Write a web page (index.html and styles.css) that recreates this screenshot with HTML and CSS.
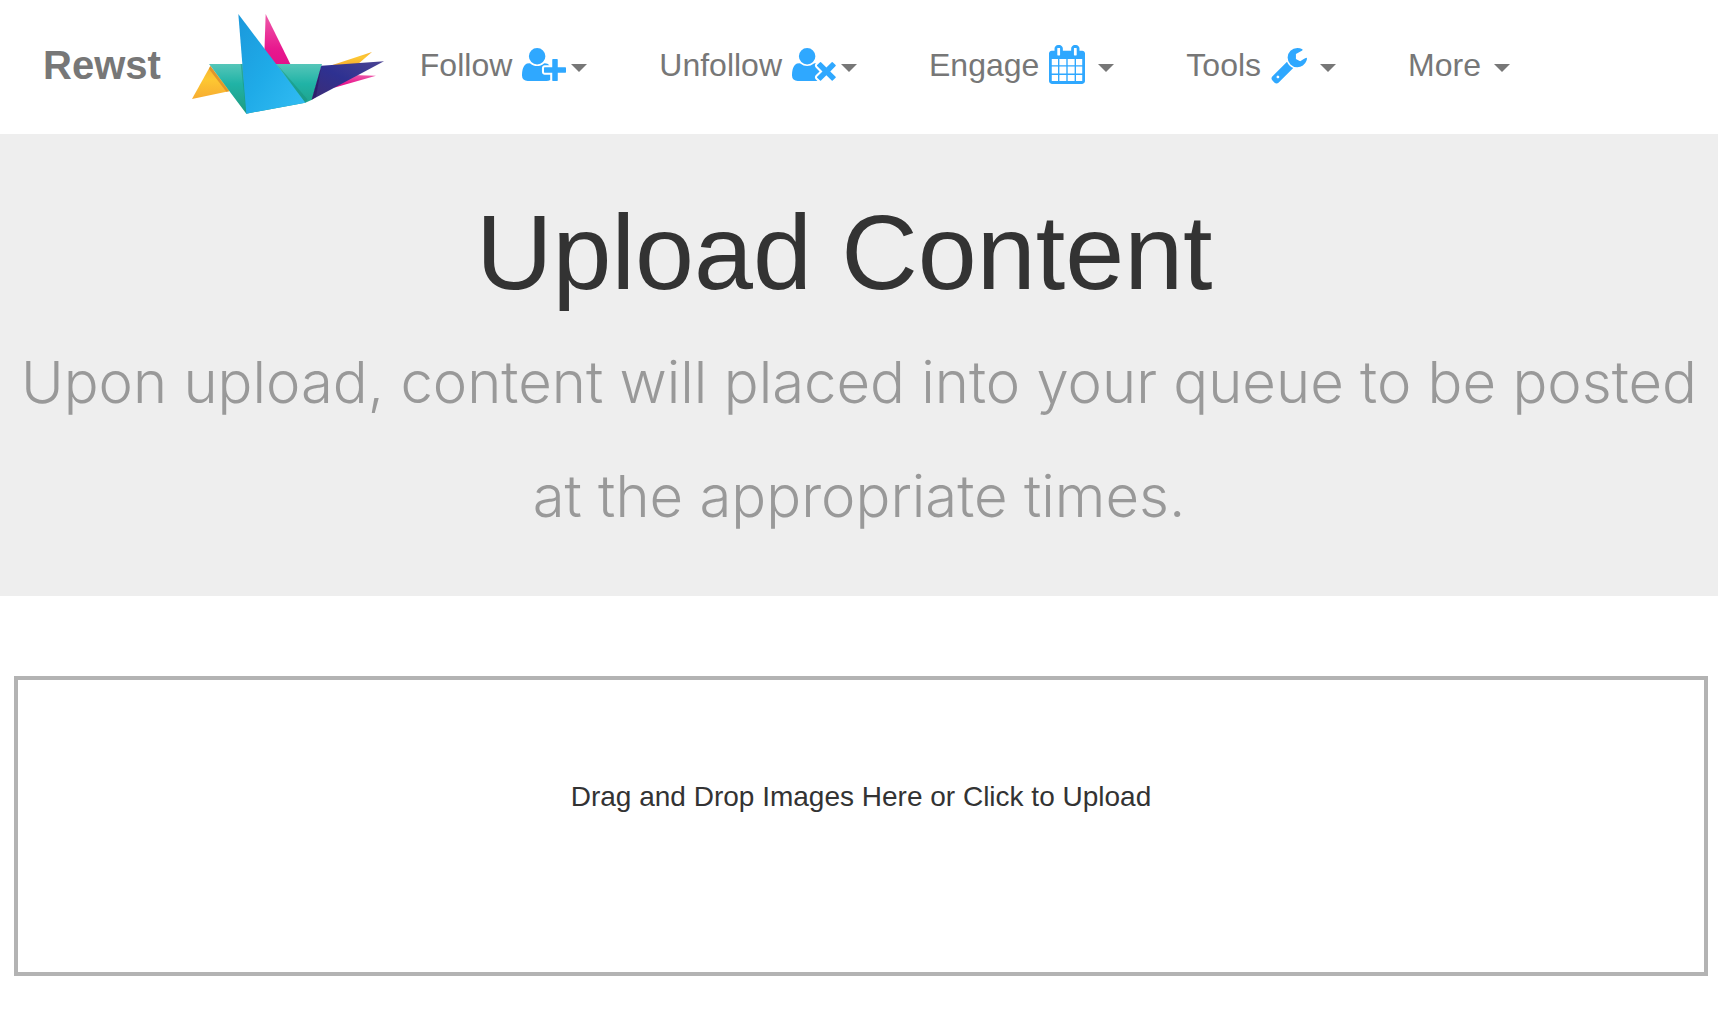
FILE: index.html
```html
<!DOCTYPE html>
<html lang="en">
<head>
<meta charset="utf-8">
<meta name="viewport" content="width=device-width, initial-scale=1">
<title>Rewst - Upload Content</title>
<link rel="stylesheet" href="styles.css">
</head>
<body>
<header class="navbar">
  <a class="brand" href="#">
    <span>Rewst</span>
    <svg class="logo" viewBox="36 42 576 300" aria-hidden="true">
      <defs>
        <linearGradient id="blue" x1="0" y1="0" x2="1" y2="1"><stop offset="0" stop-color="#1b98db"/><stop offset=".5" stop-color="#1fabe8"/><stop offset="1" stop-color="#33bdf3"/></linearGradient>
        <linearGradient id="teal" x1="0" y1="0" x2="0" y2="1"><stop offset="0" stop-color="#55c6b9"/><stop offset=".4" stop-color="#20b3a6"/><stop offset="1" stop-color="#1f9b80"/></linearGradient>
        <linearGradient id="pink" x1="0" y1="0" x2="0" y2="1"><stop offset="0" stop-color="#ee5aa9"/><stop offset=".7" stop-color="#e8188e"/><stop offset="1" stop-color="#e3128a"/></linearGradient>
        <linearGradient id="gold" x1="0" y1="0" x2="0" y2="1"><stop offset="0" stop-color="#f6b233"/><stop offset=".4" stop-color="#fdc832"/><stop offset="1" stop-color="#f7ac31"/></linearGradient>
        <linearGradient id="navy" x1="1" y1="0" x2="0" y2="1"><stop offset="0" stop-color="#4b4393"/><stop offset=".5" stop-color="#2e3191"/><stop offset="1" stop-color="#3d2c75"/></linearGradient>
      </defs>
      <path fill="url(#gold)" d="M91 198L36 297L150 273Z"/>
      <path fill="url(#pink)" d="M257 42L252 192H331Z"/>
      <path fill="url(#teal)" d="M87 192H290L376 308L199 341ZM287 192H426L396 299L376 308Z"/>
      <path fill="#178f7c" opacity=".5" d="M182 192L199 341L187 192ZM290 192L376 308L382 298Z"/>
      <path fill="#d98c2b" opacity=".8" d="M91 198L147 274L139 275L87 207Z"/>
      <path fill="url(#blue)" d="M175 42L376 308L199 341L187 192Z"/>
      <path fill="url(#gold)" d="M576 156L455 196L530 196Z"/>
      <path fill="url(#pink)" d="M588 227L490 224L462 263Z"/>
      <path fill="url(#navy)" d="M424 197L612 184L395 299Z"/>
      <path fill="#2a1a66" opacity=".7" d="M424 197L395 299L408 291Z"/>
    </svg>
  </a>
  <nav class="menu" aria-label="Main">
    <button class="menu-item" type="button">
      <span>Follow</span>
      <svg class="icon icon-user" viewBox="0 0 2048 1792" aria-hidden="true"><path d="M704 896q-159 0-271.500-112.500t-112.500-271.500 112.500-271.500 271.500-112.500 271.500 112.500 112.500 271.500-112.500 271.500-271.500 112.500zm960 128h352q13 0 22.500 9.500t9.500 22.500v192q0 13-9.500 22.500t-22.500 9.500h-352v352q0 13-9.500 22.500t-22.500 9.500h-192q-13 0-22.500-9.500t-9.500-22.500v-352h-352q-13 0-22.500-9.500t-9.500-22.500v-192q0-13 9.500-22.500t22.500-9.500h352v-352q0-13 9.500-22.500t22.500-9.500h192q13 0 22.500 9.500t9.500 22.500v352zm-736 224q0 52 38 90t90 38h256v238q-68 50-171 50h-874q-121 0-194-69t-73-190q0-53 3.500-103.500t14-109 26.500-108.500 43-97.500 62-81 85.500-53.500 111.500-20q19 0 39 17 79 61 154.500 91.500t164.500 30.500 164.500-30.500 154.500-91.500q20-17 39-17 132 0 217 96h-223q-52 0-90 38t-38 90v192z"/></svg>
      <span class="caret"></span>
    </button>
    <button class="menu-item" type="button">
      <span>Unfollow</span>
      <svg class="icon icon-user" viewBox="0 0 2048 1792" aria-hidden="true"><path d="M704 896q-159 0-271.500-112.500t-112.500-271.500 112.500-271.500 271.500-112.500 271.500 112.500 112.500 271.500-112.500 271.500-271.500 112.500zm1077 320l249 249q9 9 9 23 0 13-9 22l-136 136q-9 9-22 9-14 0-23-9l-249-249-249 249q-9 9-23 9-13 0-22-9l-136-136q-9-9-9-22 0-14 9-23l249-249-249-249q-9-9-9-23 0-13 9-22l136-136q9-9 22-9 14 0 23 9l249 249 249-249q9-9 23-9 13 0 22 9l136 136q9 9 9 22 0 14-9 23zm-498 0l-181-181q-37-37-37-91 0-33 13-56t41-50q-29-6-57-6-19 0-39 17-154 122-319 122t-319-122q-20-17-39-17-61 0-111.500 20t-85.500 53.500-62 81-43 97.500-26.500 108.500-14 109-3.500 103.500q0 121 73 190t194 69h874q23 0 44-3l-83-83q-37-37-37-90 0-54 37-91z"/></svg>
      <span class="caret"></span>
    </button>
    <button class="menu-item" type="button">
      <span>Engage</span>
      <svg class="icon icon-tool" viewBox="64 0 1664 1792" aria-hidden="true"><path d="M192 1664h288v-288h-288v288zm352 0h320v-288h-320v288zm-352-352h288v-320h-288v320zm352 0h320v-320h-320v320zm-352-384h288v-288h-288v288zm736 736h320v-288h-320v288zm-384-736h320v-288h-320v288zm768 736h288v-288h-288v288zm-384-352h320v-320h-320v320zm-352-864v-288q0-13-9.500-22.500t-22.500-9.500h-64q-13 0-22.500 9.500t-9.500 22.500v288q0 13 9.500 22.500t22.500 9.500h64q13 0 22.500-9.500t9.500-22.500zm736 864h288v-320h-288v320zm-384-384h320v-288h-320v288zm384 0h288v-288h-288v288zm32-480v-288q0-13-9.500-22.500t-22.500-9.500h-64q-13 0-22.500 9.500t-9.500 22.500v288q0 13 9.500 22.500t22.500 9.500h64q13 0 22.500-9.500t9.500-22.500zm384-64v1280q0 52-38 90t-90 38h-1408q-52 0-90-38t-38-90v-1280q0-52 38-90t90-38h128v-96q0-66 47-113t113-47h64q66 0 113 47t47 113v96h384v-96q0-66 47-113t113-47h64q66 0 113 47t47 113v96h128q52 0 90 38t38 90z"/></svg>
      <span class="caret"></span>
    </button>
    <button class="menu-item" type="button">
      <span>Tools</span>
      <svg class="icon icon-tool" viewBox="64 0 1664 1792" aria-hidden="true"><path d="M448 1472q0-26-19-45t-45-19-45 19-19 45 19 45 45 19 45-19 19-45zm644-420l-682 682q-37 37-90 37-52 0-91-37l-106-108q-38-36-38-90 0-53 38-91l681-681q39 98 114.500 173.500t173.500 114.500zm634-435q0 39-23 106-47 134-164.500 217.500t-258.500 83.500q-185 0-316.500-131.500t-131.500-316.500 131.500-316.500 316.500-131.500q58 0 121.500 16.500t107.500 46.500q16 11 16 28t-16 28l-293 169v224l193 107q5-3 79-48.500t135.500-81 70.500-35.500q15 0 23.500 10t8.500 25z"/></svg>
      <span class="caret"></span>
    </button>
    <button class="menu-item" type="button">
      <span>More</span>
      <span class="caret caret-text"></span>
    </button>
  </nav>
</header>
<main>
  <section class="hero">
    <h1 class="title">Upload Content&nbsp;</h1>
    <p class="lead">Upon upload, content will placed into your queue to be posted at the appropriate times.</p>
  </section>
  <button class="dropzone" type="button">Drag and Drop Images Here or Click to Upload</button>
</main>
</body>
</html>
```
FILE: styles.css
```css
* {
  box-sizing: border-box;
}

body {
  margin: 0;
  background: #fff;
  color: #333;
  font-family: "Liberation Sans", Arial, sans-serif;
}

.navbar {
  display: flex;
  align-items: center;
  min-height: 134px;
  padding: 0 40px 4px 43px;
  color: #777;
}

.brand {
  display: flex;
  align-items: center;
  gap: 31px;
  margin-right: 36px;
  color: inherit;
  font-size: 40px;
  font-weight: bold;
  text-decoration: none;
}

.logo {
  width: 192px;
  height: 100px;
  margin-bottom: 2px;
}

.menu {
  display: flex;
  gap: 72px;
}

.menu-item {
  display: flex;
  align-items: center;
  padding: 0;
  border: 0;
  background: none;
  color: inherit;
  font-family: inherit;
  font-size: 32px;
  line-height: 40px;
  cursor: pointer;
}

.icon {
  height: 39px;
  fill: #2fa8ff;
}

.icon-user {
  width: 44px;
  margin: 0 5px 2px 10px;
}

.icon-tool {
  width: 36px;
  margin: 0 13px 2px 10px;
}

.caret {
  margin-top: 6px;
  border-top: 8px solid #777;
  border-right: 8px solid transparent;
  border-left: 8px solid transparent;
}

.caret-text {
  margin-left: 13px;
}

.hero {
  min-height: 462px;
  padding: 58px 12px 40px;
  background: #eee;
  text-align: center;
}

.title {
  margin: 0;
  font-size: 106px;
  font-weight: normal;
  line-height: 120px;
}

.lead {
  margin: 13px 0 0;
  color: #999;
  font-family: Inter, "Liberation Sans", sans-serif;
  font-size: 58px;
  font-weight: 300;
  line-height: 114px;
}

.dropzone {
  display: block;
  width: calc(100% - 24px);
  min-height: 300px;
  margin: 80px 10px 32px 14px;
  padding: 0 0 58px;
  border: 4px solid #b3b3b3;
  background: #fff;
  color: #333;
  font-family: inherit;
  font-size: 28px;
  cursor: pointer;
}
```
